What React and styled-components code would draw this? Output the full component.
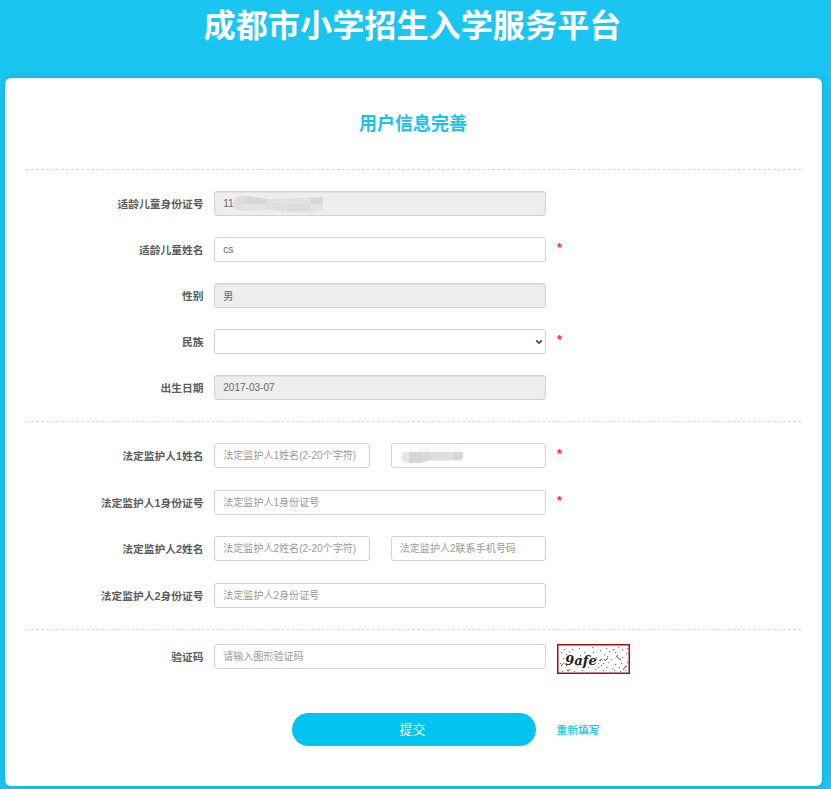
import React from 'react';
import styled, { createGlobalStyle } from 'styled-components';

const App = () => (
  <Page>
    <GlobalStyle />
    <SiteTitle>成都市小学招生入学服务平台</SiteTitle>

    <Card>
      <FormTitle>用户信息完善</FormTitle>

      <Section $height={252} $top={21}>
        <Field label="适龄儿童身份证号">
          <Disabled>
            11
            <ChildMask />
          </Disabled>
        </Field>
        <Field label="适龄儿童姓名" required>
          <Input defaultValue="cs" />
        </Field>
        <Field label="性别">
          <Disabled>男</Disabled>
        </Field>
        <Field label="民族" required>
          <SelectBox>
            <Chevron />
          </SelectBox>
        </Field>
        <Field label="出生日期">
          <Disabled>2017-03-07</Disabled>
        </Field>
      </Section>

      <Section $height={208} $top={21}>
        <Field label="法定监护人1姓名" height={47} required>
          <Input placeholder="法定监护人1姓名(2-20个字符)" />
          <Box>
            <PhoneMask />
          </Box>
        </Field>
        <Field label="法定监护人1身份证号" required>
          <Input placeholder="法定监护人1身份证号" />
        </Field>
        <Field label="法定监护人2姓名" height={47}>
          <Input placeholder="法定监护人2姓名(2-20个字符)" />
          <Input placeholder="法定监护人2联系手机号码" />
        </Field>
        <Field label="法定监护人2身份证号">
          <Input placeholder="法定监护人2身份证号" />
        </Field>
      </Section>

      <Section $height={84} $top={14}>
        <Field label="验证码" extra={<Captcha />}>
          <Input placeholder="请输入图形验证码" />
        </Field>
      </Section>

      <Actions>
        <Submit type="button">提交</Submit>
        <Reset href="#">重新填写</Reset>
      </Actions>
    </Card>
  </Page>
);

const Field = (props) => {
  const { label, required, extra, height, children } = props;

  return (
    <Row $height={height}>
      <Label>{label}</Label>
      <Controls>{children}</Controls>
      {required && <Star>*</Star>}
      {extra}
    </Row>
  );
};

const ChildMask = () => (
  <Mask width="94" height="20" viewBox="0 0 94 20">
    <path d="M2 5Q6 1 13 2L35 5 66 4 91 3V16L78 19 52 18 36 16 12 17Q3 17 1 12Z" fill="#e2e2e2" />
    <path d="M1 10 6 3 15 2V10Z" fill="#dcdcdc" />
    <path d="M15 2 35 5V10H15Z M78 4 91 3V10H78Z" fill="#d8d8d8" />
    <path d="M55 10H78V17H55Z" fill="#dcdcdc" />
    <path d="M35 9H48V16L35 15Z" fill="#dedede" />
  </Mask>
);

const PhoneMask = () => (
  <svg width="65" height="18" viewBox="0 0 65 18">
    <path d="M9 3Q30 -1 62 0V6H4Z" fill="#fafafa" />
    <path d="M4 5H9V16Q1 16 1 10 1 7 4 5Z" fill="#e7e7e7" />
    <path d="M9 5H31V13L20 16H9Z" fill="#d7d7d8" />
    <path d="M31 5H54V13.500H31Z" fill="#dededf" />
    <path d="M54 5H63V9Q63 13 59 13.500H54Z" fill="#d7d7d8" />
    <path d="M22 5H31V13L22 14Z" fill="#dadadb" />
  </svg>
);

const Chevron = () => (
  <svg width="8" height="6" viewBox="0 0 8 6">
    <path d="M1.200 1.300 4 4.100 6.800 1.300" fill="none" stroke="#444" strokeWidth="1.700" />
  </svg>
);

const SPECKS = [
  [22, 4], [35, 3], [36, 8], [43, 6], [52, 7], [61, 3], [65, 5], [69, 9], [4, 8], [9, 10],
  [6, 14], [3, 19], [12, 25], [17, 27], [25, 26], [31, 23], [38, 25], [41, 23], [46, 26], [49, 23],
  [55, 24], [58, 20], [63, 27], [69, 22], [70, 18], [50, 12], [47, 15], [43, 16], [54, 15], [41, 19],
  [46, 19], [51, 18], [60, 11], [58, 8], [65, 13], [33, 12], [27, 8], [15, 5], [20, 21], [29, 28],
  [5, 27], [9, 21], [68, 26], [53, 28], [36, 28], [56, 5], [47, 10], [39, 13], [11, 17], [64, 19],
  [44, 21], [23, 11], [70, 4], [35, 17], [57, 26], [26, 23], [7, 5], [62, 23], [12, 7], [49, 4],
];

const Captcha = () => (
  <CaptchaBox width="73" height="30" viewBox="0 0 73 30">
    <rect x="0.750" y="0.750" width="71.500" height="28.500" fill="#fff" stroke="#a90b12" strokeWidth="1.500" />
    <path d="M4 22 7 19M48 17 51 14M59 12 64 16M66 26 69 22M42 17 45 15M10 26 12 27" stroke="#555" strokeWidth="1" />
    {SPECKS.map(([x, y]) => (
      <rect key={`${x}-${y}`} x={x} y={y} width="1.200" height="1.200" fill="#777" />
    ))}
    <text x="8" y="21" textLength="32" lengthAdjust="spacingAndGlyphs">
      9afe
    </text>
  </CaptchaBox>
);

export default App;

const GlobalStyle = createGlobalStyle`
  * {
    box-sizing: border-box;
  }

  body {
    margin: 0;
    background: #1ac5f1;
    font-family: "Liberation Sans", "Noto Sans CJK SC", sans-serif;
    color: #555;
  }
`;

const Page = styled.div`
  height: 789px;
  padding: 0 9px 0 5px;
  overflow: hidden;
`;

const SiteTitle = styled.h1`
  height: 77.500px;
  margin: 0;
  padding: 2px 2px 0 0;
  font-size: 32.150px;
  line-height: 48px;
  font-weight: bold;
  text-align: center;
  color: #fff;
`;

const Card = styled.main`
  height: 708.500px;
  padding: 0 21px;
  border-radius: 6px;
  background: #fff;
  box-shadow: 0 0 10px rgba(0, 80, 120, 0.2);
`;

const FormTitle = styled.h2`
  height: 91.500px;
  margin: 0;
  padding: 32px 1px 0 0;
  font-size: 18px;
  line-height: 28px;
  text-align: center;
  color: #1ac1ee;
`;

const Section = styled.section`
  height: ${(props) => props.$height}px;
  padding-top: ${(props) => props.$top}px;
  border-top: 1px dashed #d9d9d9;
`;

const Row = styled.div`
  display: grid;
  grid-template-columns: 177.500px 332px auto;
  column-gap: 10.750px;
  align-items: start;
  justify-content: start;
  height: ${(props) => props.$height || 46}px;
`;

const Label = styled.label`
  font-size: 10.750px;
  line-height: 26px;
  font-weight: bold;
  text-align: right;
  white-space: nowrap;
  color: #5c5c5c;
`;

const Controls = styled.div`
  display: grid;
  grid-auto-flow: column;
  grid-auto-columns: minmax(0, 1fr);
  column-gap: 21px;
`;

const Input = styled.input`
  width: 100%;
  height: 25px;
  padding: 0 8px;
  border: 1px solid #d2d2d2;
  border-radius: 3px;
  outline: none;
  background: #fff;
  font: 10.050px "Liberation Sans", "Noto Sans CJK SC", sans-serif;
  color: #666;

  &::placeholder {
    color: #999;
  }
`;

const Box = styled.div`
  display: flex;
  align-items: center;
  height: 25px;
  padding: 0 8px;
  border: 1px solid #d2d2d2;
  border-radius: 3px;
  font-size: 10.050px;
  color: #666;
`;

const Disabled = styled(Box)`
  background: #eee;
  box-shadow: inset 0 1px 1px rgba(0, 0, 0, 0.06);
`;

const SelectBox = styled(Box)`
  justify-content: flex-end;
  padding: 0 2px;
`;

const Mask = styled.svg`
  margin-left: -2px;
`;

const Star = styled.span`
  font-size: 13px;
  line-height: 22px;
  font-weight: bold;
  color: #ff2a2a;
`;

const CaptchaBox = styled.svg`
  text {
    font: italic bold 12px "DejaVu Serif", serif;
    fill: #222;
  }
`;

const Actions = styled.div`
  display: flex;
  align-items: center;
  gap: 21px;
  padding-left: 265.500px;
`;

const Submit = styled.button`
  width: 244px;
  height: 33px;
  padding: 0 2px 2px 0;
  border: 0;
  border-radius: 17px;
  background: #00c4f0;
  font: 13px "Liberation Sans", "Noto Sans CJK SC", sans-serif;
  color: #fff;
`;

const Reset = styled.a`
  font-size: 10.750px;
  font-weight: 500;
  color: #1ac1ee;
  text-decoration: none;
`;
